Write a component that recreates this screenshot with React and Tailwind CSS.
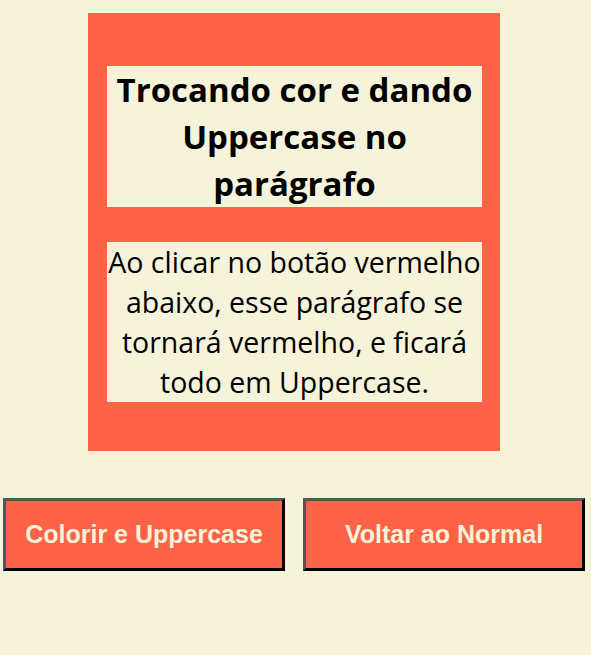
export default function App() {
  return (
    <div className="min-h-[655px] bg-[#f5f3da] pt-[13px]">
      <section className="ml-[88px] w-[412px] bg-[#ff6347] pb-[49px] pl-[19px] pr-[18px] pt-[53px]">
        <h1 className="bg-[#f5f3da] text-center text-[33px] font-bold leading-[47px] text-black [font-family:'Open_Sans',sans-serif]">
          Trocando cor e dando Uppercase no parágrafo
        </h1>
        <p className="mt-[35px] bg-[#f5f3da] text-center text-[28.5px] leading-[40px] text-black [font-family:'Open_Sans',sans-serif]">
          Ao clicar no botão vermelho abaixo, esse parágrafo se tornará vermelho, e ficará todo em Uppercase.
        </p>
      </section>
      <div className="mt-[47px] flex gap-[18px] pl-[3px]">
        <button className="h-[73px] w-[282px] border-[3px] border-t-[#555] border-l-[#555] border-b-black border-r-black bg-[#ff6347] text-[25px] font-bold text-[#f5f3da] [font-family:'Liberation_Sans',Arial,sans-serif]">
          Colorir e Uppercase
        </button>
        <button className="h-[73px] w-[282px] border-[3px] border-t-[#555] border-l-[#555] border-b-black border-r-black bg-[#ff6347] text-[25px] font-bold text-[#f5f3da] [font-family:'Liberation_Sans',Arial,sans-serif]">
          Voltar ao Normal
        </button>
      </div>
    </div>
  );
}
